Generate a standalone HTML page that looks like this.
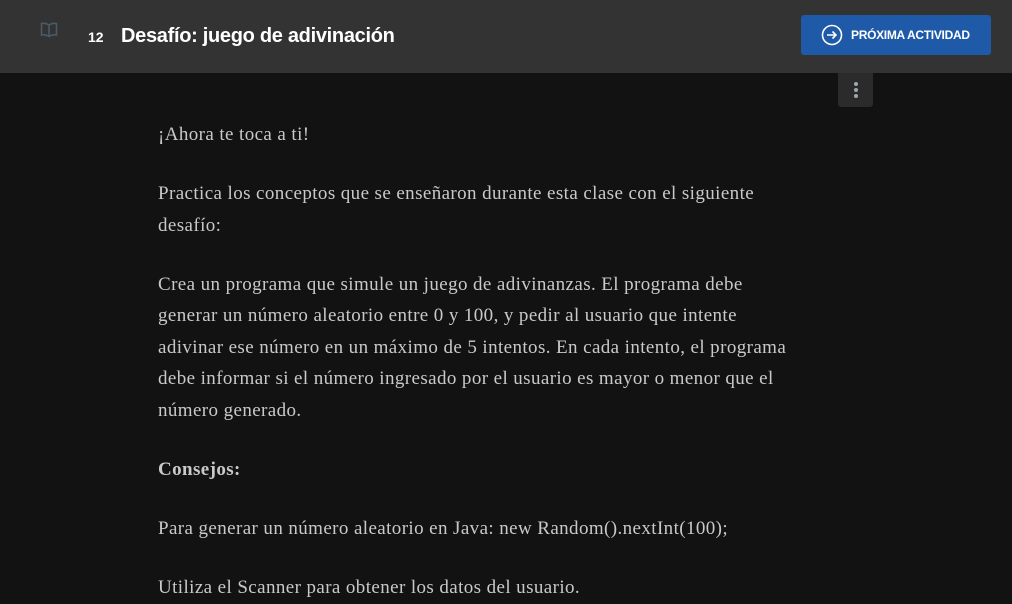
<!DOCTYPE html>
<html style="height:604px;overflow:hidden"><head><meta charset="utf-8"><style>
body{margin:0;width:1012px;height:604px;overflow:hidden;background:#121212;font-family:"Liberation Sans",sans-serif;position:relative}
.hdr{position:absolute;left:0;top:0;width:1012px;height:73px;background:#333}
.num{position:absolute;left:88px;top:29px;color:#fff;font-size:14px;font-weight:bold}
.title{position:absolute;left:121px;top:25px;color:#fff;font-size:20px;font-weight:bold;letter-spacing:-0.3px}
.btn{position:absolute;left:801px;top:15px;width:190px;height:40px;background:#1f5aa9;border-radius:3px;color:#fff;font-size:12px;font-weight:bold;letter-spacing:-0.3px}
.btn span{position:absolute;left:50px;top:13px}
.keb{position:absolute;left:838px;top:73px;width:35px;height:34px;background:#2b2b2b;border-radius:0 0 3px 3px}
.keb i{position:absolute;left:16px;width:4px;height:4px;border-radius:2px;background:#9aa}
.c{position:absolute;left:158px;top:119px;width:700px;color:#c9c9c9;font-family:"Liberation Serif",serif;font-size:19px;letter-spacing:0.4px;line-height:31.5px;white-space:nowrap}
.c p{margin:0 0 27.5px}
</style></head><body>
<div class="hdr">
<svg style="position:absolute;left:40px;top:22px" width="18" height="16" viewBox="0 0 18 16"><path d="M9 3C7 1.5 4 1 1.5 1.5V13c2.5-.5 5.5 0 7.5 1.5 2-1.5 5-2 7.5-1.5V1.5C14 1 11 1.5 9 3zM9 3v11.5" fill="none" stroke="#4a5a66" stroke-width="1.6"/></svg>
<div class="num">12</div>
<div class="title">Desafío: juego de adivinación</div>
<div class="btn"><svg style="position:absolute;left:20px;top:9px" width="22" height="22" viewBox="0 0 22 22"><circle cx="11" cy="11" r="9.5" fill="none" stroke="#fff" stroke-width="1.6"/><path d="M6 11h9M11.5 7.5L15 11l-3.5 3.5" fill="none" stroke="#fff" stroke-width="1.6"/></svg><span>PRÓXIMA ACTIVIDAD</span></div>
</div>
<div class="keb"><i style="top:9px"></i><i style="top:15px"></i><i style="top:21px"></i></div>
<div class="c">
<p>¡Ahora te toca a ti!</p>
<p>Practica los conceptos que se enseñaron durante esta clase con el siguiente<br>desafío:</p>
<p>Crea un programa que simule un juego de adivinanzas. El programa debe<br>generar un número aleatorio entre 0 y 100, y pedir al usuario que intente<br>adivinar ese número en un máximo de 5 intentos. En cada intento, el programa<br>debe informar si el número ingresado por el usuario es mayor o menor que el<br>número generado.</p>
<p><b>Consejos:</b></p>
<p>Para generar un número aleatorio en Java: new Random().nextInt(100);</p>
<p>Utiliza el Scanner para obtener los datos del usuario.</p>
</div>
</body></html>
